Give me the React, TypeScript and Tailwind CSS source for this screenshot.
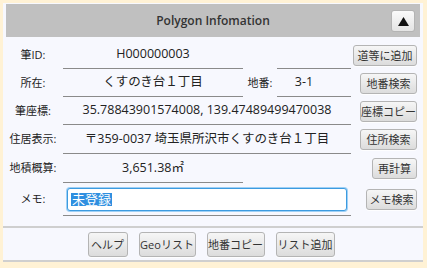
import React from "react";

const btn =
  "h-[21px] px-0 whitespace-nowrap rounded-[3px] border border-[#b4b4b4] bg-gradient-to-b from-[#f6f6f6] to-[#dcdcdc] text-[11px] leading-none text-[#333] shadow-[0_1px_0_rgba(255,255,255,0.8)]";

const Field: React.FC<{ w: string; children?: React.ReactNode }> = ({ w, children }) => (
  <div className={`${w} h-full flex items-center justify-center border-b border-[#8a8a8a] text-[12.5px] whitespace-nowrap text-[#222]`}>
    {children}
  </div>
);

const Label: React.FC<{ children: React.ReactNode }> = ({ children }) => (
  <div className="w-[60px] shrink-0 text-center text-[11px] text-[#222]">{children}</div>
);

const Row: React.FC<{ h?: string; children: React.ReactNode; button: string; bw: string }> = ({
  h = "h-[28px]",
  children,
  button,
  bw,
}) => (
  <div className={`flex items-end ${h}`}>
    <div className="flex items-center h-full w-[348px]">{children}</div>
    <div className="flex-1 flex justify-end items-center h-full pr-[6px]">
      <button className={`${btn} ${bw}`}>{button}</button>
    </div>
  </div>
);

const App: React.FC = () => {
  return (
    <div
      className="w-[427px] h-[268px] bg-[#fff2d5] pt-[3px] px-[3px]"
      style={{ fontFamily: '"Open Sans", "Noto Sans CJK JP", sans-serif' }}
    >
      <div className="w-[420px] h-[259px] bg-[#f7f8fe] border-b-2 border-[#cfcfcf] flex flex-col">
        <div className="mx-[3px] mt-[1px] h-[33px] bg-[#c0c0c0] relative flex items-center justify-center">
          <span className="text-[12px] font-semibold text-[#333]">Polygon Infomation</span>
          <button className="absolute right-[5px] top-[6px] w-[24px] h-[22px] rounded-[3px] border border-[#b4b4b4] bg-gradient-to-b from-[#fafafa] to-[#e4e4e4] flex items-center justify-center">
            <svg width="11" height="9" viewBox="0 0 11 9">
              <polygon points="5.5,0 11,9 0,9" fill="#111" />
            </svg>
          </button>
        </div>

        <div className="mt-[4px] flex flex-col">
          <Row button="道等に追加" bw="w-[64px]">
            <Label>筆ID:</Label>
            <Field w="w-[180px]">H000000003</Field>
            <div className="w-[34px]" />
            <Field w="w-[74px]" />
          </Row>
          <Row button="地番検索" bw="w-[57px]">
            <Label>所在:</Label>
            <Field w="w-[180px]">くすのき台１丁目</Field>
            <div className="w-[34px] text-center text-[11px] text-[#222]">地番:</div>
            <Field w="w-[74px]">
              <span className="-ml-[20px]">3-1</span>
            </Field>
          </Row>
          <Row button="座標コピー" bw="w-[57px]">
            <Label>筆座標:</Label>
            <Field w="w-[288px]">35.78843901574008, 139.47489499470038</Field>
          </Row>
          <Row h="h-[29px]" button="住所検索" bw="w-[57px]">
            <Label>住居表示:</Label>
            <Field w="w-[288px]">〒359-0037 埼玉県所沢市くすのき台１丁目</Field>
          </Row>
          <Row h="h-[29px]" button="再計算" bw="w-[45px]">
            <Label>地積概算:</Label>
            <Field w="w-[180px]">3,651.38㎡</Field>
          </Row>
          <div className="flex h-[33px]">
            <div className="flex items-center h-full w-[348px]">
              <Label>メモ:</Label>
              <div className="w-[288px] h-full border-b border-[#8a8a8a] flex items-center px-[4px]">
                <div className="w-full h-[23px] rounded-[3px] border border-[#3c9be0] bg-white shadow-[0_0_0_1px_#9fd0f5] flex items-center px-[3px]">
                  <span className="text-[13px] leading-none bg-[#2f8fe0] text-white px-[1px]">未登録</span>
                </div>
              </div>
            </div>
            <div className="flex-1 flex justify-end items-center h-full pr-[6px]">
              <button className={`${btn} w-[51px]`}>メモ検索</button>
            </div>
          </div>
        </div>

        <div className="mt-[10px] border-t-2 border-[#cfcfcf] flex-1 flex items-center justify-center gap-[11px] pr-[4px]">
          <button className={`${btn} h-[25px] w-[40px]`}>ヘルプ</button>
          <button className={`${btn} h-[25px] w-[57px]`}>Geoリスト</button>
          <button className={`${btn} h-[25px] w-[58px]`}>地番コピー</button>
          <button className={`${btn} h-[25px] w-[59px]`}>リスト追加</button>
        </div>
      </div>
    </div>
  );
};

export default App;
